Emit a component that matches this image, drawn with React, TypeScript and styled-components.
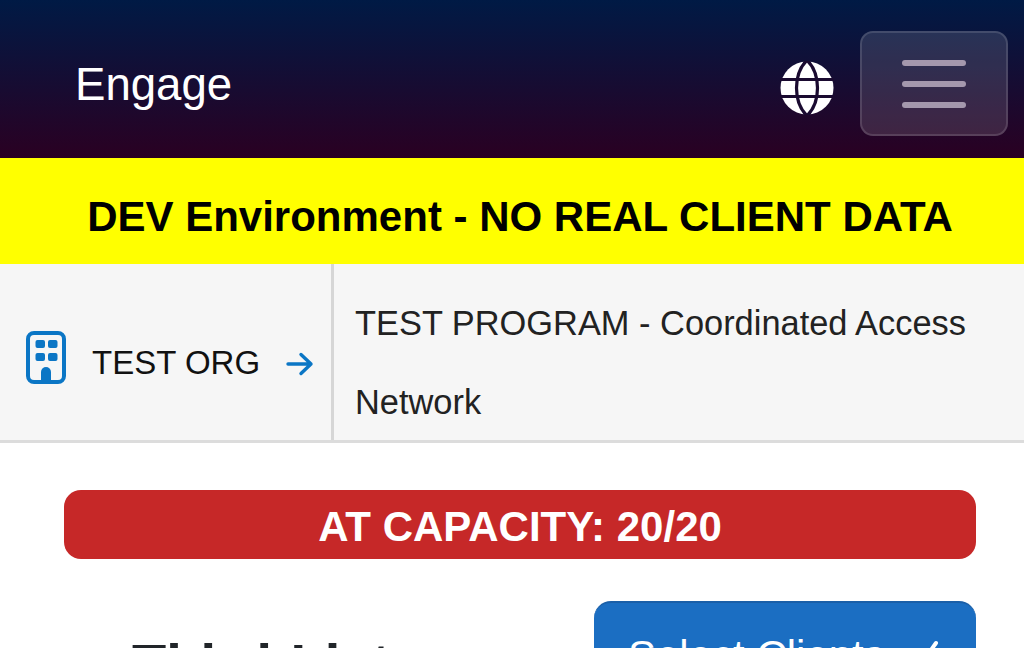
import React from "react";
import styled, { createGlobalStyle } from "styled-components";

const GlobalStyle = createGlobalStyle`
  html, body {
    margin: 0;
    padding: 0;
    width: 1024px;
    height: 648px;
    overflow: hidden;
    background: #fff;
    font-family: "Liberation Sans", Arial, sans-serif;
  }
`;

const Page = styled.div`
  width: 1024px;
  height: 648px;
  overflow: hidden;
`;

const Navbar = styled.header`
  height: 158px;
  box-sizing: border-box;
  padding: 31px 16px 22px 75px;
  display: flex;
  align-items: center;
  background: linear-gradient(180deg, #001a45 0%, #2a0022 100%);
`;

const Brand = styled.div`
  flex: 1;
  color: #fff;
  font-size: 45.6px;
  margin-top: 2px;
`;

const GlobeSvg = styled.svg`
  margin-top: 8px;
`;

const Toggler = styled.button`
  width: 148px;
  height: 105px;
  margin-left: 26px;
  padding: 0;
  box-sizing: border-box;
  border: 2px solid rgba(255, 255, 255, 0.13);
  border-radius: 13px;
  background: rgba(255, 255, 255, 0.13);
  display: flex;
  flex-direction: column;
  align-items: center;
  justify-content: center;
  gap: 15px;
`;

const TogglerBar = styled.span`
  width: 64px;
  height: 6px;
  border-radius: 3px;
  background: #a498ad;
`;

const DevBanner = styled.div`
  height: 106px;
  box-sizing: border-box;
  padding: 12px 0 0 16px;
  background: #ffff00;
  color: #000;
  font-size: 42px;
  font-weight: 700;
  display: flex;
  align-items: center;
  justify-content: center;
  white-space: nowrap;
`;

const Breadcrumbs = styled.nav`
  height: 179px;
  box-sizing: border-box;
  display: flex;
  background: #f6f6f6;
  border-bottom: 3px solid #dcdcdc;
`;

const OrgCell = styled.div`
  width: 334px;
  box-sizing: border-box;
  padding: 22px 0 0 26px;
  border-right: 3px solid #d6d6d6;
  display: flex;
  align-items: center;
  font-size: 33px;
  color: #111;
`;

const OrgName = styled.span`
  margin-left: 26px;
  margin-right: 26px;
  white-space: nowrap;
`;

const BuildingSvg = styled.svg`
  margin-top: -11px;
`;

const ArrowSvg = styled.svg`
  margin-top: 2px;
`;

const ProgramCell = styled.div`
  flex: 1;
  padding: 20px 40px 0 21px;
  font-size: 34.4px;
  line-height: 79px;
  color: #222;
`;

const Content = styled.main`
  padding: 47px 48px 0 64px;
`;

const CapacityBar = styled.div`
  height: 69px;
  box-sizing: border-box;
  padding-top: 4px;
  border-radius: 17px;
  background: #c62828;
  color: #fff;
  font-size: 42px;
  font-weight: 700;
  display: flex;
  align-items: center;
  justify-content: center;
`;

const ListHeader = styled.div`
  margin-top: 42px;
  display: flex;
  justify-content: space-between;
  align-items: flex-start;
`;

const ListTitle = styled.h2`
  margin: 30px 0 0 68px;
  font-size: 56px;
  font-weight: 700;
  word-spacing: 3px;
  color: #212529;
`;

const SelectButton = styled.button`
  width: 382px;
  height: 110px;
  box-sizing: border-box;
  border: 0;
  border-top: 2px solid #1a5fa8;
  border-radius: 17px;
  background: #1b6ec2;
  color: #fff;
  font-family: inherit;
  font-size: 42px;
  padding: 29px 0 0 34px;
  display: flex;
  align-items: flex-start;
  gap: 22px;
  white-space: nowrap;
`;

const CheckSvg = styled.svg`
  margin-top: 8px;
`;

const GlobeIcon = () => (
  <GlobeSvg width="54" height="54" viewBox="0 0 54 54" aria-hidden="true">
    <circle cx="27" cy="27" r="26.5" fill="#fff" />
    <g fill="none" stroke="#1a0a30" strokeWidth="3.2">
      <path d="M27 -1C13 13 13 41 27 55C41 41 41 13 27 -1z" />
      <path d="M0 18.5h54M0 35.5h54" />
    </g>
  </GlobeSvg>
);

const BuildingIcon = () => (
  <BuildingSvg width="40" height="53" viewBox="0 0 40 53" aria-hidden="true">
    <rect x="2" y="2" width="36" height="49" rx="6" fill="none" stroke="#0b76c5" strokeWidth="4" />
    <g fill="#0b76c5">
      <rect x="9.5" y="9" width="9.5" height="8" rx="2" />
      <rect x="22" y="9" width="9.5" height="8" rx="2" />
      <rect x="9.5" y="22" width="9.5" height="8" rx="2" />
      <rect x="22" y="22" width="9.5" height="8" rx="2" />
      <path d="M15 51V41a5 5 0 0 1 10 0v10z" />
    </g>
  </BuildingSvg>
);

const ArrowIcon = () => (
  <ArrowSvg width="28" height="24" viewBox="0 0 28 24" aria-hidden="true">
    <path d="M2 12h23M15 2.5 25 12l-10 9.5" fill="none" stroke="#0b76c5" strokeWidth="3.4" strokeLinecap="round" strokeLinejoin="round" />
  </ArrowSvg>
);

const CheckIcon = () => (
  <CheckSvg width="32" height="30" viewBox="0 0 32 30" aria-hidden="true">
    <path d="M3 18l9 9L29 3" fill="none" stroke="#fff" strokeWidth="4" strokeLinecap="round" strokeLinejoin="round" />
  </CheckSvg>
);

export default function App() {
  return (
    <Page>
      <GlobalStyle />
      <Navbar>
        <Brand>Engage</Brand>
        <GlobeIcon />
        <Toggler aria-label="Toggle navigation">
          <TogglerBar />
          <TogglerBar />
          <TogglerBar />
        </Toggler>
      </Navbar>
      <DevBanner>DEV Environment - NO REAL CLIENT DATA</DevBanner>
      <Breadcrumbs>
        <OrgCell>
          <BuildingIcon />
          <OrgName>TEST ORG</OrgName>
          <ArrowIcon />
        </OrgCell>
        <ProgramCell>TEST PROGRAM - Coordinated Access Network</ProgramCell>
      </Breadcrumbs>
      <Content>
        <CapacityBar>AT CAPACITY: 20/20</CapacityBar>
        <ListHeader>
          <ListTitle>Third List</ListTitle>
          <SelectButton>
            Select Clients
            <CheckIcon />
          </SelectButton>
        </ListHeader>
      </Content>
    </Page>
  );
}
